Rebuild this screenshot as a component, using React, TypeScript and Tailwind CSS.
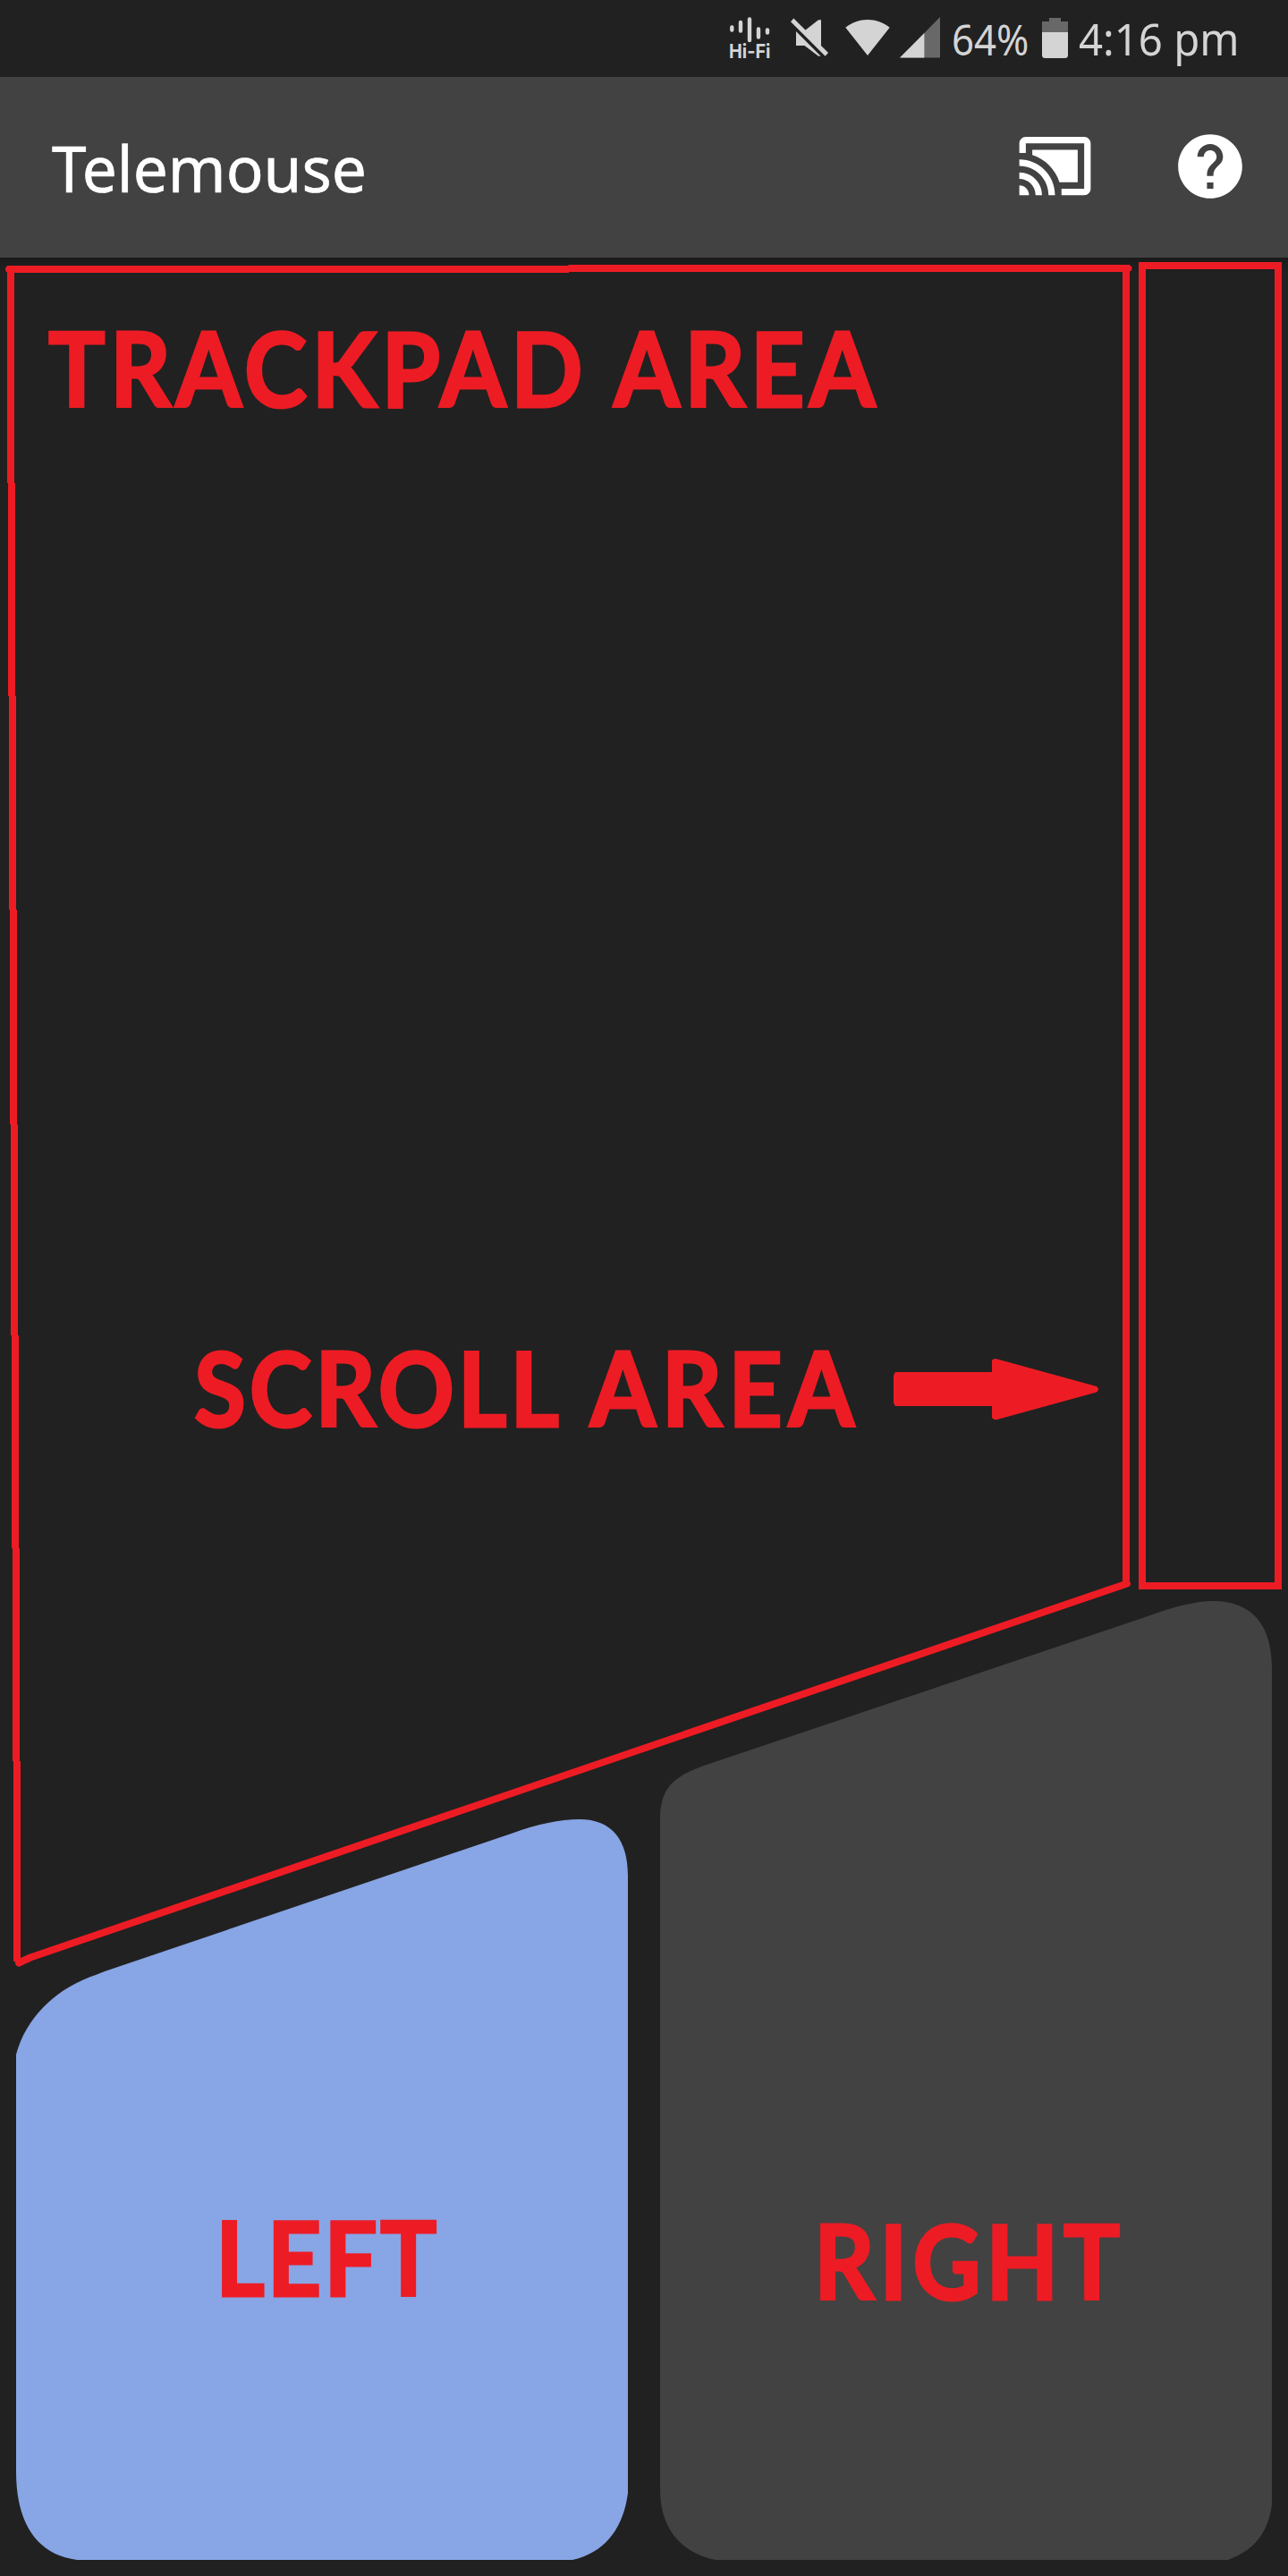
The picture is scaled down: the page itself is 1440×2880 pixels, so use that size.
import React from "react";

const label =
  "block h-[117px] origin-left whitespace-nowrap font-['Lato'] text-[114px] font-bold leading-[117px] text-[#ed1c24] [-webkit-text-stroke:3px_#ed1c24] [stroke-linejoin:round] [paint-order:stroke]";

function StatusBar() {
  return (
    <div className="relative flex h-[86px] bg-[#212121] font-['Noto_Sans',sans-serif] text-[#d4d4d4]">
      <div className="ml-[815px] flex w-[48px] flex-col pt-[19px]">
        <svg className="h-[29px] w-[48px]" viewBox="0 0 48 29" stroke="#d4d4d4" strokeWidth="4.4" strokeLinecap="round">
          <path d="M3.3 11.5V14.5M13 6V15.5M23 2.5V26M33 13.5V22.5M43 14.5V17.5" />
        </svg>
        <span className="block h-[18px] origin-left scale-x-[0.9] whitespace-nowrap font-['Inter',sans-serif] text-[22px] font-bold leading-[19px]">Hi-Fi</span>
      </div>
      <svg className="ml-[20px] mt-[19px] h-[46px] w-[45px]" viewBox="883 19 45 46" fill="#d4d4d4">
        <path d="M884 24.3 887.3 20.6 926 59 922.6 62.8Z" />
        <path d="M900 34 915 22.2H918V52.2Z" />
        <path d="M890 35 917.6 62.7H915L899.5 51H890Z" />
      </svg>
      <svg className="ml-[16px] mt-[19px] h-[46px] w-[54px]" viewBox="944 19 54 46" fill="#d4d4d4">
        <path d="M945.3 30.8C959.5 19 980.5 19 994.7 30.8L970 62Z" />
      </svg>
      <svg className="ml-[8px] mt-[19px] h-[46px] w-[45px]" viewBox="0 0 46 46" preserveAspectRatio="none">
        <path d="M0 45.5 46 0V45.5Z" fill="#686868" />
        <path d="M0 45.5 28 18V45.5Z" fill="#d4d4d4" />
      </svg>
      <span className="ml-[13px] block h-[86px] w-[83px] origin-left scale-x-[0.91] whitespace-nowrap pt-[10px] text-[48px] leading-[68px]">64%</span>
      <svg className="ml-[18px] mt-[20px] h-[45px] w-[29px]" viewBox="0 0 29 45">
        <path d="M0 16V4H8V0H21V4H29V16Z" fill="#686868" />
        <path d="M0 16H29V41.5Q29 45 25.500 45H3.500Q0 45 0 41.500Z" fill="#d4d4d4" />
      </svg>
      <span className="ml-[12px] block h-[86px] w-[185px] origin-left scale-x-[0.946] whitespace-nowrap pt-[9px] text-[50px] leading-[68px]">4:16 pm</span>
    </div>
  );
}

function AppBar() {
  return (
    <header className="flex h-[202px] items-start justify-between bg-[#424242] text-white">
      <h1 className="ml-[58px] mt-[65px] block h-[72px] w-[360px] origin-left scale-x-[0.963] whitespace-nowrap font-['Noto_Sans',sans-serif] text-[72px] font-normal leading-[72px] [-webkit-text-stroke:0.6px_white]">Telemouse</h1>
      <div className="flex">
        <svg className="mr-[87px] mt-[56px] h-[87px] w-[87px]" viewBox="0 0 24 24" fill="currentColor">
          <path d="M1 18v3h3c0-1.660-1.340-3-3-3zm0-4v2c2.760 0 5 2.240 5 5h2c0-3.870-3.130-7-7-7zm18-7H5v1.630c3.960 1.280 7.090 4.410 8.370 8.370H19V7zM1 10v2c4.970 0 9 4.030 9 9h2c0-6.080-4.930-11-11-11zm20-7H3c-1.100 0-2 .9-2 2v3h2V5h18v14h-7v2h7c1.100 0 2-.9 2-2V5c0-1.100-.9-2-2-2z" />
        </svg>
        <svg className="mr-[44px] mt-[57px] h-[86px] w-[86px]" viewBox="0 0 24 24" fill="currentColor">
          <path d="M12 2C6.480 2 2 6.480 2 12s4.480 10 10 10 10-4.480 10-10S17.520 2 12 2zm1 17h-2v-2h2v2zm2.070-7.750-.9.920C13.450 12.900 13 13.500 13 15h-2v-.5c0-1.100.45-2.100 1.170-2.830l1.240-1.260c.37-.36.59-.86.59-1.410 0-1.100-.9-2-2-2s-2 .9-2 2H8c0-2.210 1.790-4 4-4s4 1.790 4 4c0 .88-.36 1.680-.93 2.250z" />
        </svg>
      </div>
    </header>
  );
}

function Outlines() {
  return (
    <svg className="absolute left-0 top-0 h-[2592px] w-[1440px]" viewBox="0 288 1440 2592" fill="none" stroke="#ed1c24" strokeWidth="8">
      <rect x="1277" y="297" width="152" height="1476" />
      <path d="M8 301H636M635.500 300H1263" />
      <path d="M9.500 301H12M1259 300H1262" strokeLinecap="round" strokeWidth="7" />
      <path d="M1259 300V1773" />
      <path d="M12 301V540M13 540V778M14 778V1017M15 1017V1257M16 1257V1493M17 1493V1731M18 1731V1969M19 1969V2193" />
      <path d="M1260 1770.500 34 2188.500 21 2194.500" strokeLinejoin="round" strokeLinecap="round" />
    </svg>
  );
}

function Trackpad() {
  return (
    <section className="flex h-[1502px] flex-col pt-[64px]">
      <span className={label + " ml-[54px] scale-x-[0.93] tracking-[5.7px] [word-spacing:2px]"}>TRACKPAD AREA</span>
      <div className="mt-[1023px] flex h-[117px]">
        <span className={label + " ml-[217px] w-[782px] scale-x-[0.925] tracking-[4.1px] [word-spacing:5px]"}>
          SCROLL <span className="tracking-[7.3px]">AREA</span>
        </span>
        <svg className="mt-[26px] h-[70px] w-[230px]" viewBox="999 1518 230 70" fill="#ed1c24">
          <path d="M1001 1534H1109V1521Q1111 1518 1115 1519.500L1226 1550Q1230 1553 1226 1556.500L1115 1587Q1111 1588 1109 1585V1572H1001Q999 1570 999 1567V1539Q999 1536 1001 1534Z" />
        </svg>
      </div>
    </section>
  );
}

function MouseButtons() {
  return (
    <div className="flex h-[1072px] items-end gap-[36px] pl-[18px]">
      <button className="relative block h-[828px] w-[684px] text-left">
        <svg className="absolute inset-0 h-[828px] w-[684px]" viewBox="18 2034 684 828" fill="#88a5e5">
          <path d="M18 2297C29 2256 62 2223 107 2208L117 2204 573 2049.500Q615 2034 648 2034C684 2034 702 2057 702 2097V2787C697 2827 676 2854 640 2862H86C41 2856 18 2821 18 2763Z" />
        </svg>
        <span className="relative block h-full pl-[223px] pt-[430px]">
          <span className={label + " scale-x-[0.925] tracking-[3.2px]"}>LEFT</span>
        </span>
      </button>
      <button className="relative block h-[1072px] w-[684px] text-left">
        <svg className="absolute inset-0 h-[1072px] w-[684px]" viewBox="738 1790 684 1072" fill="#424242">
          <path d="M738 2035C738 2000 751 1987 787 1974L1283 1807Q1329 1790 1356 1790C1402 1790 1422 1819 1422 1865V2800C1418 2831 1403 2851 1373 2862H800C758 2853 738 2824 738 2783Z" />
        </svg>
        <span className="relative block h-full pl-[172px] pt-[678px]">
          <span className={label + " scale-x-[0.925] tracking-[6px]"}>RIGHT</span>
        </span>
      </button>
    </div>
  );
}

export default function App() {
  return (
    <div className="h-[2880px] w-[1440px] overflow-hidden bg-[#212121]">
      <StatusBar />
      <AppBar />
      <main className="relative h-[2592px] bg-[linear-gradient(#1a1a1a,#212121_18px)]">
        <Outlines />
        <Trackpad />
        <MouseButtons />
      </main>
    </div>
  );
}
